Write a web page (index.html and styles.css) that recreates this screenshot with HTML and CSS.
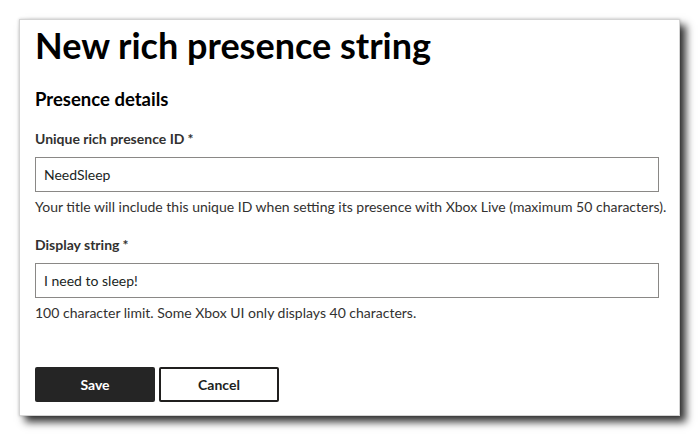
FILE: index.html
```html
<!DOCTYPE html>
<html lang="en">
<head>
<meta charset="utf-8">
<title>New rich presence string</title>
<link rel="stylesheet" href="styles.css">
</head>
<body>
<div class="card">
  <h1 class="title">New rich presence string</h1>
  <h2 class="section">Presence details</h2>
  <div class="field">
    <label class="label">Unique rich presence ID<span class="req">*</span></label>
    <div class="input">NeedSleep</div>
    <p class="help">Your title will include this unique ID when setting its presence with Xbox Live (maximum 50 characters).</p>
  </div>
  <div class="field second">
    <label class="label">Display string<span class="req">*</span></label>
    <div class="input">I need to sleep!</div>
    <p class="help">100 character limit. Some Xbox UI only displays 40 characters.</p>
  </div>
  <div class="actions">
    <button class="btn primary">Save</button>
    <button class="btn secondary">Cancel</button>
  </div>
</div>
</body>
</html>
```
FILE: styles.css
```css
html, body {
  margin: 0;
  padding: 0;
  background: #ffffff;
}
body {
  font-family: Lato, "Open Sans", sans-serif;
  color: #323130;
  padding: 19px 0 20px 19px;
}
.card {
  width: 661px;
  height: 397px;
  box-sizing: border-box;
  background: #fff;
  border: 1px solid #d4d4d4;
  padding: 3px 20px 14px 15px;
  box-shadow: 6px 6px 8px rgba(0,0,0,0.8), 0 0 3px rgba(0,0,0,0.2);
  display: flex;
  flex-direction: column;
}
.title {
  margin: 0;
  font-size: 36px;
  line-height: 44px;
  font-weight: 700;
  color: #000;
}
.section {
  margin: 20px 0 0;
  font-size: 18.5px;
  line-height: 24px;
  font-weight: 700;
  color: #000;
}
.field {
  margin-top: 18px;
  display: flex;
  flex-direction: column;
}
.label {
  font-size: 14px;
  line-height: 20px;
  font-weight: 700;
  color: #323130;
}
.req {
  margin-left: 3px;
}
.input {
  margin-top: 8px;
  height: 35px;
  box-sizing: border-box;
  border: 1px solid #8a8886;
  padding: 0 8px;
  font-size: 14px;
  line-height: 33px;
  color: #201f1e;
}
.help {
  margin: 5px 0 0;
  font-size: 14px;
  line-height: 20px;
  white-space: nowrap;
}
.actions {
  margin-top: 44px;
  display: flex;
  gap: 4px;
}
.btn {
  width: 120px;
  height: 35px;
  box-sizing: border-box;
  border-radius: 2px;
  font-family: inherit;
  font-size: 14px;
  font-weight: 700;
  cursor: pointer;
}
.primary {
  background: #252525;
  color: #fff;
  border: none;
}
.secondary {
  background: #fff;
  color: #201f1e;
  border: 2px solid #201f1e;
}
```
